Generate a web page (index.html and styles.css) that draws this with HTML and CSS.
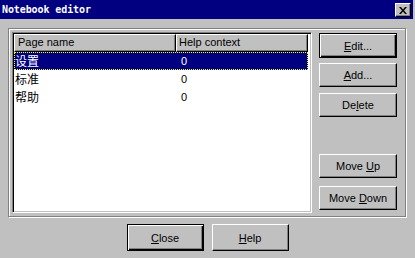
FILE: index.html
```html
<!DOCTYPE html>
<html>
<head>
<meta charset="utf-8">
<link rel="stylesheet" href="styles.css">
</head>
<body>
<div class="window">
  <div class="titlebar">
    <span class="title">Notebook editor</span>
    <span class="xbtn"><svg width="8" height="7" viewBox="0 0 8 7"><path d="M0 0h2l2 2.5L6 0h2L5 3.5 8 7H6L4 4.5 2 7H0l3-3.5z" fill="#000"/></svg></span>
  </div>
  <div class="content">
    <div class="group">
      <div class="listbox">
        <div class="header">
          <div class="hcell c1">Page name</div>
          <div class="hcell c2">Help context</div>
        </div>
        <div class="row selected"><span class="cell c1 cjk">设置</span><span class="cell c2">0</span></div>
        <div class="row"><span class="cell c1 cjk">标准</span><span class="cell c2">0</span></div>
        <div class="row"><span class="cell c1 cjk">帮助</span><span class="cell c2">0</span></div>
      </div>
      <div class="side">
        <div class="btn default edit"><span><u>E</u>dit...</span></div>
        <div class="btn add"><span><u>A</u>dd...</span></div>
        <div class="btn del"><span>De<u>l</u>ete</span></div>
        <div class="btn up"><span>Move <u>U</u>p</span></div>
        <div class="btn down"><span>Move <u>D</u>own</span></div>
      </div>
    </div>
    <div class="bottom">
      <div class="btn default wide"><span><u>C</u>lose</span></div>
      <div class="btn wide"><span><u>H</u>elp</span></div>
    </div>
  </div>
</div>
</body>
</html>
```
FILE: styles.css
```css
html, body {
  margin: 0;
  padding: 0;
}
body {
  width: 415px;
  height: 258px;
  background: #c0c0c0;
  overflow: hidden;
  font-family: "Liberation Sans", Arial, sans-serif;
  font-size: 11px;
  color: #000;
}
.window {
  width: 415px;
  height: 258px;
  box-sizing: border-box;
}
.titlebar {
  height: 19px;
  margin-right: 2px;
  background: #000080;
  display: flex;
  align-items: center;
  justify-content: space-between;
  padding-left: 2px;
  padding-right: 2px;
  box-sizing: border-box;
}
.title {
  font-family: "DejaVu Sans Mono", "Liberation Mono", monospace;
  font-weight: bold;
  font-size: 10px;
  color: #fff;
  letter-spacing: -0.1px;
}
.xbtn {
  width: 16px;
  height: 14px;
  box-sizing: border-box;
  background: #c0c0c0;
  border: 1px solid;
  border-color: #fff #000 #000 #fff;
  box-shadow: inset -1px -1px #808080;
  display: flex;
  align-items: center;
  justify-content: center;
  margin-top: 1px;
}
.content {
  padding: 9px 9px 0 8px;
}
.group {
  height: 189px;
  box-sizing: border-box;
  border: 1px solid #808080;
  box-shadow: inset 1px 1px #fff, 1px 1px #fff;
  display: flex;
  padding: 3px 8px 3px 3px;
}
.listbox {
  width: 300px;
  height: 181px;
  box-sizing: border-box;
  background: #fff;
  border: 1px solid;
  border-color: #808080 #fff #fff #808080;
  box-shadow: inset 1px 1px #000, inset -1px -1px #c0c0c0;
  padding: 1px 3px 1px 1px;
}
.header {
  display: flex;
  height: 18px;
}
.hcell {
  height: 18px;
  box-sizing: border-box;
  background: #c0c0c0;
  border: 1px solid;
  border-color: #fff #000 #000 #fff;
  box-shadow: inset -1px -1px #808080;
  line-height: 15px;
  padding-left: 3px;
  white-space: nowrap;
  overflow: hidden;
}
.hcell.c1 { width: 162px; }
.hcell.c2 { flex: 1; padding-left: 2px; }
.row {
  display: flex;
  height: 18px;
  line-height: 18px;
  box-sizing: border-box;
}
.row.selected {
  background: #000080;
  color: #fff;
  outline: 1px dotted #ffff00;
  outline-offset: -1px;
}
.cell.c1 {
  width: 162px;
  padding-left: 1px;
  box-sizing: border-box;
}
.cell.c2 {
  padding-left: 5px;
}
.cjk {
  font-family: "Noto Sans CJK SC", sans-serif;
  font-size: 12px;
}
.side {
  margin-left: 7px;
  display: flex;
  flex-direction: column;
  width: 78px;
}
.btn {
  height: 24px;
  box-sizing: border-box;
  background: #c0c0c0;
  border: 1px solid;
  border-color: #fff #000 #000 #fff;
  box-shadow: inset -1px -1px #808080;
  display: flex;
  align-items: center;
  justify-content: center;
  white-space: nowrap;
}
.btn.default {
  border-color: #000;
  box-shadow: inset 1px 1px #fff, inset -1px -1px #000, inset -2px -2px #808080;
}
.btn.edit { height: 25px; margin-top: 1px; }
.btn.add { margin-top: 5px; }
.btn.del { margin-top: 6px; }
.btn.up { margin-top: 37px; }
.btn.down { margin-top: 8px; }
.bottom {
  display: flex;
  justify-content: center;
  gap: 8px;
  margin-top: 7px;
  padding-left: 1px;
}
.btn.wide {
  width: 77px;
  height: 27px;
}
u {
  text-decoration: underline;
  text-underline-offset: 1px;
}
```
